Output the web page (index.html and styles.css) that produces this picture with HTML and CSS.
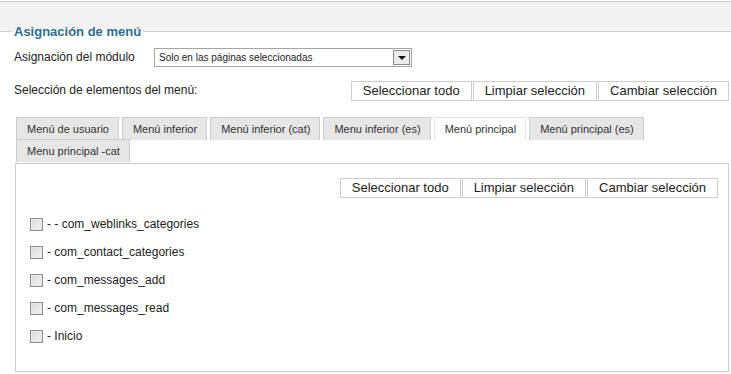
FILE: index.html
```html
<!DOCTYPE html>
<html lang="es">

<head>
    <meta charset="UTF-8">
    <title>Asignación de menú</title>
    <link rel="stylesheet" href="styles.css">
</head>

<body>
    <div class="panelWrap">
        <fieldset class="menuSet">
            <legend>Asignación de menú</legend>

            <div class="row rowSelect">
                <label class="rowLabel">Asignación del módulo</label>
                <div class="fakeSelect">
                    <span class="fakeSelect-text">Solo en las páginas seleccionadas</span>
                    <span class="fakeSelect-arrow"></span>
                </div>
            </div>

            <div class="row rowButtons">
                <span class="rowLabel">Selección de elementos del menú:</span>
                <div class="btnGroup">
                    <button class="btn">Seleccionar todo</button>
                    <button class="btn">Limpiar selección</button>
                    <button class="btn">Cambiar selección</button>
                </div>
            </div>

            <ul class="tabs">
                <li>Menú de usuario</li>
                <li>Menú inferior</li>
                <li>Menú inferior (cat)</li>
                <li>Menu inferior (es)</li>
                <li class="active">Menú principal</li>
                <li>Menú principal (es)</li>
                <li>Menu principal -cat</li>
            </ul>

            <div class="tabPanel">
                <div class="btnGroup panelButtons">
                    <button class="btn">Seleccionar todo</button>
                    <button class="btn">Limpiar selección</button>
                    <button class="btn">Cambiar selección</button>
                </div>

                <ul class="itemList">
                    <li><span class="check"></span>- - com_weblinks_categories</li>
                    <li><span class="check"></span>- com_contact_categories</li>
                    <li><span class="check"></span>- com_messages_add</li>
                    <li><span class="check"></span>- com_messages_read</li>
                    <li><span class="check"></span>- Inicio</li>
                </ul>
            </div>
        </fieldset>
    </div>
</body>

</html>
```

FILE: styles.css
```css
* {
    margin: 0;
    padding: 0;
    list-style: none;
    box-sizing: border-box;
}

html,
body {
    width: 100%;
    height: 100%;
    background: #fff;
}

body {
    font-family: "Liberation Sans", Arial, sans-serif;
    font-size: 12px;
    color: #222;
    overflow: hidden;
}

.panelWrap {
    margin-top: 1px;
    padding-top: 22px;
    background: #f2f2f2;
    border-top: solid 1px #d0d0d0;
}

.menuSet {
    background: #fff;
    border: 0;
    border-top: solid 1px #cfcfcf;
    padding: 0 2px 10px 14px;
    min-width: 0;
}

.menuSet legend {
    padding: 0 2px;
    margin-left: -2px;
    color: #2d6e8e;
    font-size: 13px;
    font-weight: bold;
    line-height: 15px;
}

.row {
    display: flex;
    align-items: center;
}

.rowSelect {
    margin-top: 8px;
    height: 20px;
}

.rowSelect .rowLabel {
    width: 140px;
}

.fakeSelect {
    width: 258px;
    height: 19px;
    border: solid 1px #a5a5a5;
    display: flex;
    align-items: center;
    justify-content: space-between;
    padding: 0 1px 0 4px;
}

.fakeSelect-text {
    font-size: 10px;
}

.fakeSelect-arrow {
    width: 17px;
    height: 15px;
    border: solid 1px #8a8a8a;
    background: #ececec;
    position: relative;
}

.fakeSelect-arrow::after {
    content: "";
    position: absolute;
    left: 4px;
    top: 5px;
    border-left: 4px solid transparent;
    border-right: 4px solid transparent;
    border-top: 4px solid #111;
}

.rowButtons {
    margin-top: 14px;
    justify-content: space-between;
    align-items: flex-start;
}

.rowButtons .rowLabel {
    margin-top: 2px;
}

.btnGroup {
    display: flex;
    gap: 1px;
}

.btn {
    height: 20px;
    padding: 0 11px;
    border: solid 1px #cdcdcd;
    background: #fff;
    font-family: "Liberation Sans", Arial, sans-serif;
    font-size: 13px;
    color: #222;
    line-height: 18px;
}

.tabs {
    display: flex;
    flex-wrap: wrap;
    margin-top: 16px;
    margin-left: 2px;
}

.tabs li {
    height: 23px;
    line-height: 22px;
    padding: 0 9px 0 10px;
    margin-right: 3px;
    margin-bottom: -1px;
    background: #e6e6e6;
    border: solid 1px #cccccc;
    border-bottom: 0;
    font-size: 11px;
    color: #333;
}

.tabs li.active {
    background: #fff;
    border-color: #e0e0e0;
}

.tabPanel {
    margin-top: 2px;
    margin-left: 1px;
    height: 209px;
    border: solid 1px #cccccc;
    padding: 14px 10px 0 14px;
}

.panelButtons {
    justify-content: flex-end;
}

.itemList {
    margin-top: 12px;
}

.itemList li {
    height: 28px;
    display: flex;
    align-items: center;
    font-size: 12px;
    color: #222;
}

.check {
    width: 13px;
    height: 13px;
    margin-right: 4px;
    border: solid 1px #8e8e8e;
    background: linear-gradient(135deg, #d9d9d9, #f4f4f4);
    box-shadow: inset 0 0 0 1px #e8e8e8;
}
```
